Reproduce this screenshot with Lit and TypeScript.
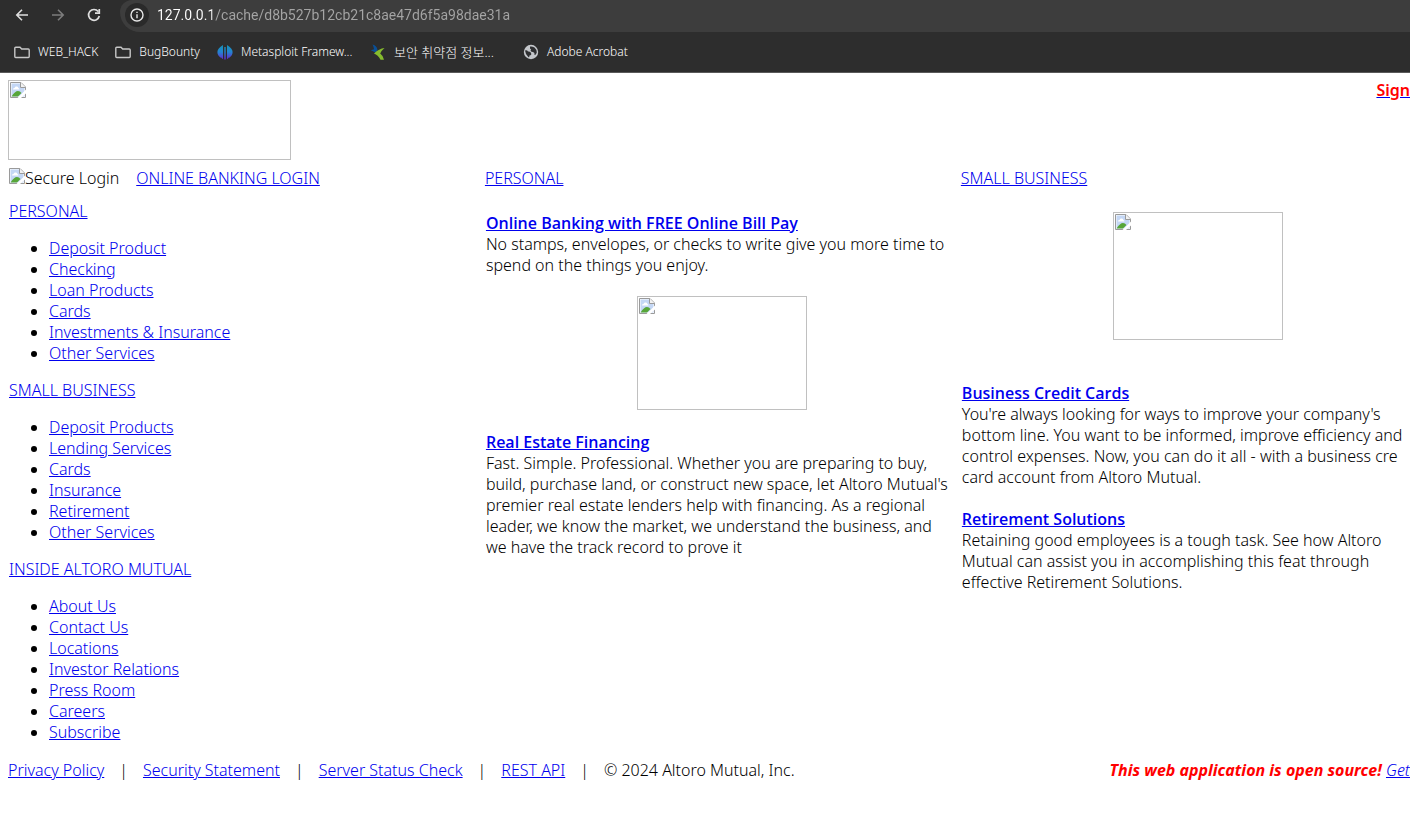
import { LitElement, html, svg, css } from "lit";
import { customElement, property } from "lit/decorators.js";

interface MenuGroup {
  title: string;
  items: string[];
}

const MENU: MenuGroup[] = [
  {
    title: "PERSONAL",
    items: ["Deposit Product", "Checking", "Loan Products", "Cards", "Investments & Insurance", "Other Services"],
  },
  {
    title: "SMALL BUSINESS",
    items: ["Deposit Products", "Lending Services", "Cards", "Insurance", "Retirement", "Other Services"],
  },
  {
    title: "INSIDE ALTORO MUTUAL",
    items: ["About Us", "Contact Us", "Locations", "Investor Relations", "Press Room", "Careers", "Subscribe"],
  },
];

const FOOTER_LINKS = ["Privacy Policy", "Security Statement", "Server Status Check", "REST API"];

const brokenIcon = html`<svg width="16" height="16" viewBox="0 0 16 16" aria-hidden="true">
  <path d="M.5 .5H11L15.5 5V15.5H.5Z" fill="#fff" />
  <path d="M1.500 1.500H10.500V5.500H14.500V14.500H1.500Z" fill="#c4d7f5" />
  <path d="M3 7.500q0-1.700 1.700-1.700q.6-1.800 2.200-1.300q1.600.3 1.400 1.600q1.200.2 1.200 1.400z" fill="#fff" />
  <path d="M1.500 14.500q3.500-5.500 6.500-5.500q2 0 3.500 2l-3.500 3.500z" fill="#57a639" />
  <path d="M.5 15.500V.5H11L15.500 5V15.500Z" fill="none" stroke="#9a9a9a" />
  <path d="M10.500 .5V5.500H15.500" fill="#f2f2f2" stroke="#9a9a9a" />
  <path d="M16 7.500L7.500 16H11L16 11.500Z" fill="#fff" />
</svg>`;

const folderIcon = svg`<path d="M1.700 3.200H6L7.700 5H14.300Q15.200 5 15.200 5.900V12.600Q15.200 13.500 14.300 13.500H1.700Q.8 13.500 .8 12.600V4.100Q.8 3.200 1.700 3.200Z" fill="none" stroke="#c7c7c7" stroke-width="1.400"/>`;

const metasploitIcon = svg`<defs><linearGradient id="ms" gradientUnits="userSpaceOnUse" x1="0" y1="0" x2="0" y2="16"><stop offset="0" stop-color="#1595b4"/><stop offset=".5" stop-color="#2484d0"/><stop offset="1" stop-color="#6a1fd0"/></linearGradient></defs>
<path d="M6 1V15L4.800 14.400V13.800L3.800 13.700Q.4 11.500 .4 8T6 1ZM10 1Q15.600 4.500 15.600 8T12.200 13.700L11.200 13.800V14.400L10 15ZM7.300 3H8.700V15.500H7.300Z" fill="url(#ms)"/>`;

const arrowLeafIcon = svg`<path d="M2.500 .5Q7 1.500 7.500 6L5.500 8.500L.8 6.300L4 5.200Q3.800 3 2.500 .5Z" fill="#0a4f96"/>
<path d="M14.500 4Q9 4.500 4 9.500Q8 11 10.500 15.700H14Q13.500 12 10.200 9.500Q11.500 6.500 14.500 4Z" fill="#86bc2e"/>`;

const globeIcon = svg`<circle cx="8" cy="8" r="7.200" fill="#c4c7cb"/>
<path d="M2 6.500Q4 5.500 5 7.500Q7.500 7 8 9Q9 11 6.500 11.500Q6.500 13.500 5.500 13.200Q2.500 11 2 6.500ZM7 2.500Q9 2 11.500 3.500Q13.800 5.500 13.800 8.500Q13 11 11.500 11Q12 8.500 10 8Q8 8 7.500 6.500Q9 5.500 7 4.500Z" fill="#2f3032"/>`;

const BOOKMARKS = [
  { label: "WEB_HACK", icon: folderIcon, style: "" },
  { label: "BugBounty", icon: folderIcon, style: "" },
  { label: "Metasploit Framew...", icon: metasploitIcon, style: "long" },
  { label: "보안 취약점 정보...", icon: arrowLeafIcon, style: "long korean" },
  { label: "Adobe Acrobat", icon: globeIcon, style: "" },
];

@customElement("browser-bar")
export class BrowserBar extends LitElement {
  static styles = css`
    :host {
      display: block;
      background: #2d2d2d;
      border-bottom: 1px solid #5a5a5a;
      color: #fff;
      font-family: "Noto Sans", "Noto Sans CJK KR", sans-serif;
    }
    .toolbar {
      display: flex;
      height: 32px;
    }
    .buttons {
      display: flex;
      align-items: center;
      gap: 20px;
      width: 120px;
      padding: 0 0 2px 14px;
      box-sizing: border-box;
    }
    button {
      display: grid;
      place-items: center;
      padding: 0;
      border: 0;
      background: none;
      color: #dedede;
    }
    button:disabled {
      color: #7c7c7c;
    }
    .address {
      display: flex;
      flex: 1;
      align-items: center;
      gap: 8px;
      padding: 0 0 2px 5px;
      background: #3d3d3d;
      border-radius: 12px 0 0 20px;
    }
    .info {
      width: 24px;
      height: 24px;
      border-radius: 50%;
      background: #2a2a2a;
      color: #e8e8e8;
    }
    input {
      flex: 1;
      min-width: 0;
      padding: 0;
      border: 0;
      outline: 0;
      font: 14px/20px Roboto, sans-serif;
      color: #a5a5a5;
      background: linear-gradient(90deg, #fff 55px, #a5a5a5 55px);
      -webkit-background-clip: text;
      background-clip: text;
      -webkit-text-fill-color: transparent;
    }
    .bookmarks {
      display: flex;
      align-items: center;
      gap: 17px;
      height: 40px;
      padding-left: 14px;
    }
    .bookmark {
      display: flex;
      align-items: center;
      gap: 8px;
      color: inherit;
      font-size: 12px;
      line-height: 20px;
      white-space: nowrap;
      text-decoration: none;
    }
    .long {
      width: 136px;
    }
    .korean {
      font-size: 13px;
    }
  `;

  render() {
    return html`
      <div class="toolbar">
        <div class="buttons">
          <button aria-label="Back">
            <svg width="16" height="16" viewBox="0 0 16 16" fill="none" stroke="currentColor" stroke-width="1.600"><path d="M14 8H3M8 2.800L2.800 8L8 13.200" /></svg>
          </button>
          <button aria-label="Forward" disabled>
            <svg width="16" height="16" viewBox="0 0 16 16" fill="none" stroke="currentColor" stroke-width="1.600"><path d="M2 8H13M8 2.800L13.200 8L8 13.200" /></svg>
          </button>
          <button aria-label="Reload">
            <svg width="16" height="16" viewBox="0 0 16 16" fill="none" stroke="currentColor" stroke-width="1.700"><path d="M13.300 9A5.400 5.400 0 1 1 12.200 4.500M13.300 2V6.200H9" /></svg>
          </button>
        </div>
        <div class="address">
          <button class="info" aria-label="Site information">
            <svg width="14" height="14" viewBox="0 0 14 14" fill="none" stroke="currentColor" stroke-width="1.400"><circle cx="7" cy="7" r="6" /><path d="M7 6.200V10.200M7 3.700V5.100" /></svg>
          </button>
          <input aria-label="Address" value="127.0.0.1/cache/d8b527b12cb21c8ae47d6f5a98dae31a" />
        </div>
      </div>
      <nav class="bookmarks">
        ${BOOKMARKS.map(
          (b) => html`<a class="bookmark ${b.style}" href="#">
            <svg width="16" height="16" viewBox="0 0 16 16" aria-hidden="true">${b.icon}</svg>
            <span>${b.label}</span>
          </a>`
        )}
      </nav>
    `;
  }
}

@customElement("missing-picture")
export class MissingPicture extends LitElement {
  @property({ reflect: true }) kind = "logo";

  static styles = css`
    :host {
      display: block;
      box-sizing: border-box;
      padding: 1px;
      border: 1px solid #c0c0c0;
      line-height: 0;
    }
    :host([kind="logo"]) {
      width: 283px;
      height: 80px;
    }
    :host([kind="house"]) {
      width: 170px;
      height: 114px;
    }
    :host([kind="card"]) {
      width: 170px;
      height: 128px;
    }
  `;

  render() {
    return brokenIcon;
  }
}

@customElement("app-root")
export class AppRoot extends LitElement {
  static styles = css`
    :host {
      display: block;
      min-height: 100vh;
      overflow: hidden;
      background: #fff;
      color: #000;
      font: 300 16px/21px "Noto Sans", "Open Sans", sans-serif;
    }
    a {
      color: #0000ee;
      text-decoration: underline;
    }
    .title {
      font-family: "Open Sans", sans-serif;
      font-weight: 600;
    }
    .page {
      padding: 7px 0 0 8px;
    }
    .header {
      display: flex;
      justify-content: space-between;
      align-items: flex-start;
      margin-bottom: 8px;
    }
    .sign {
      color: #ff0000;
      font-weight: 600;
    }
    .columns {
      display: grid;
      grid-template-columns: repeat(4, 1fr);
      width: calc(136% - 3px);
      row-gap: 12px;
      white-space: nowrap;
    }
    .cell {
      padding: 0 1px;
    }
    .login {
      display: flex;
      align-items: flex-start;
    }
    .login a {
      margin-left: 17px;
    }
    ul {
      margin: 16px 0;
      padding-left: 40px;
    }
    .story {
      padding: 12px 1px 0 2px;
    }
    p {
      margin: 0;
    }
    .title {
      display: block;
    }
    .house {
      margin: 20px auto 22px;
    }
    .card {
      margin: -1px auto 43px;
    }
    .second {
      margin-top: 21px;
    }
    .footer {
      display: flex;
      justify-content: space-between;
      margin-top: 1px;
      white-space: nowrap;
    }
    .links {
      display: flex;
      gap: 15px;
    }
    .source {
      font-style: italic;
    }
    .source b {
      font-weight: 700;
      color: #ff0000;
    }
  `;

  render() {
    return html`
      <browser-bar></browser-bar>
      <div class="page">
        <header class="header">
          <missing-picture kind="logo"></missing-picture>
          <a href="#"><span class="sign">Sign</span></a>
        </header>
        <main class="columns">
          <div class="cell login">${brokenIcon}<span>Secure Login</span><a href="#">ONLINE BANKING LOGIN</a></div>
          <div class="cell"><a href="#">PERSONAL</a></div>
          <div class="cell"><a href="#">SMALL BUSINESS</a></div>
          <div></div>
          <nav class="cell">
            ${MENU.map(
              (g) => html`<a href="#">${g.title}</a>
                <ul>
                  ${g.items.map((i) => html`<li><a href="#">${i}</a></li>`)}
                </ul>`
            )}
          </nav>
          <section class="story">
            <p>
              <a class="title" href="#">Online Banking with FREE Online Bill Pay</a>
              No stamps, envelopes, or checks to write give you more time to<br />spend on the things you enjoy.
            </p>
            <missing-picture class="house" kind="house"></missing-picture>
            <p>
              <a class="title" href="#">Real Estate Financing</a>
              Fast. Simple. Professional. Whether you are preparing to buy,<br />build, purchase land, or construct new
              space, let Altoro Mutual's<br />premier real estate lenders help with financing. As a regional<br />leader,
              we know the market, we understand the business, and<br />we have the track record to prove it
            </p>
          </section>
          <section class="story">
            <missing-picture class="card" kind="card"></missing-picture>
            <p>
              <a class="title" href="#">Business Credit Cards</a>
              You're always looking for ways to improve your company's<br />bottom line. You want to be informed, improve
              efficiency and<br />control expenses. Now, you can do it all - with a business cre<br />card account from
              Altoro Mutual.
            </p>
            <p class="second">
              <a class="title" href="#">Retirement Solutions</a>
              Retaining good employees is a tough task. See how Altoro<br />Mutual can assist you in accomplishing this
              feat through<br />effective Retirement Solutions.
            </p>
          </section>
        </main>
        <footer class="footer">
          <div class="links">
            ${FOOTER_LINKS.map((l) => html`<a href="#">${l}</a><span>|</span>`)}
            <span>© 2024 Altoro Mutual, Inc.</span>
          </div>
          <div class="source"><b>This web application is open source!</b> <a href="#">Get</a></div>
        </footer>
      </div>
    `;
  }
}
